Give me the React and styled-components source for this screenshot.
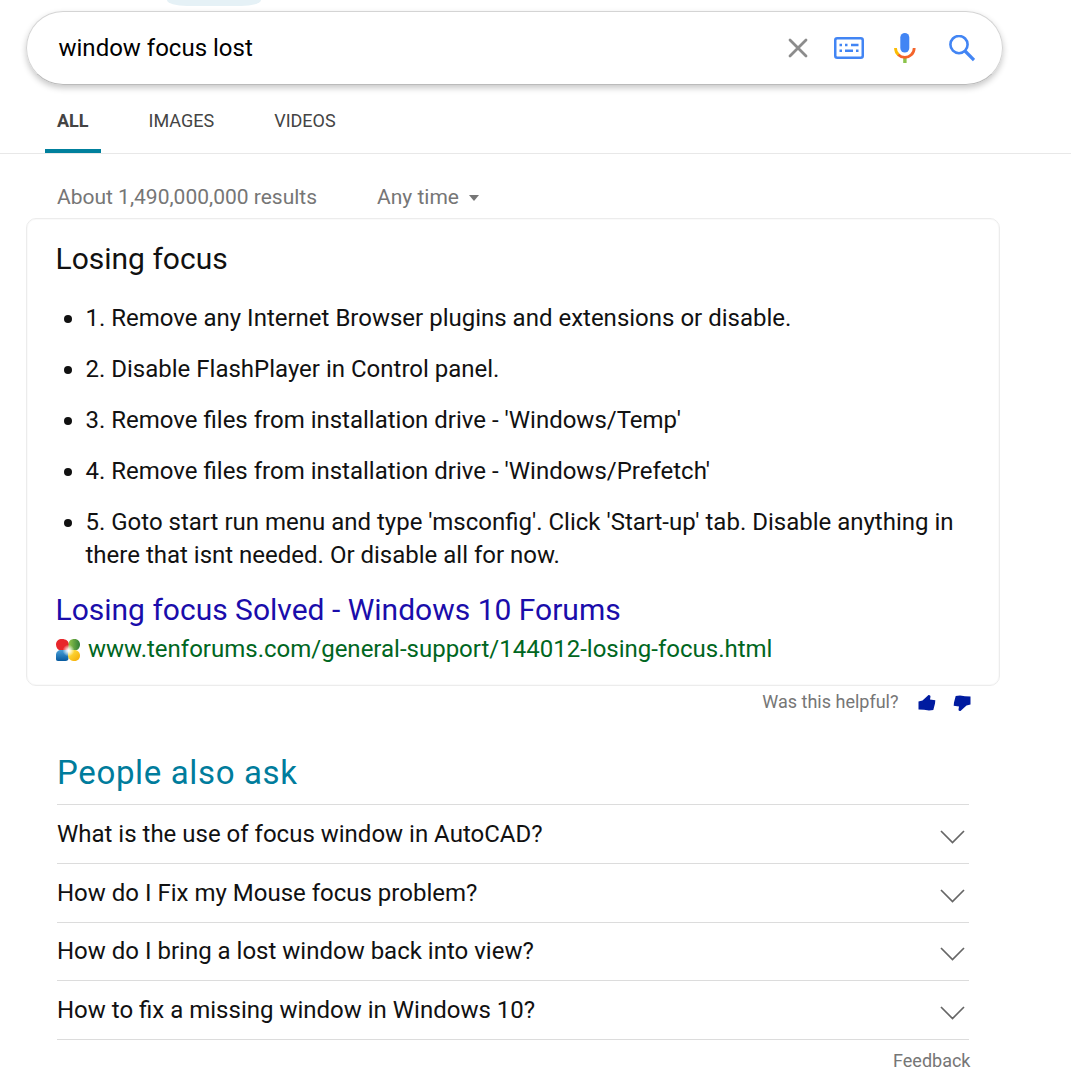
import React from 'react';
import styled, { createGlobalStyle } from 'styled-components';

const Global = createGlobalStyle`
  * { box-sizing: border-box; }
  body { margin: 0; background: #fff; font-family: Roboto, Arial, sans-serif; color: #111; overflow: hidden; }
  h1, h2, p, ul { margin: 0; padding: 0; font-weight: 400; }
  svg { display: block; flex: none; }
`;

const Page = styled.div`
  width: 1071px;
  height: 1086px;
  overflow: hidden;
`;
const TopPill = styled.div`
  width: 94px;
  height: 6px;
  margin-left: 167px;
  background: #e5f1f6;
  border-radius: 0 0 20px 20px / 0 0 6px 6px;
`;
const SearchBox = styled.div`
  display: flex;
  align-items: center;
  width: 977px;
  height: 74px;
  margin: 5px 0 0 26px;
  padding: 0 28px 0 31.5px;
  border: 1px solid #d4d4d4;
  border-bottom-color: #bbb;
  border-radius: 37px;
  box-shadow: 0 3px 6px rgba(0, 0, 0, 0.22);
`;
const Query = styled.span`
  flex: 1;
  font-size: 24px;
  line-height: 32px;
  color: #000;
`;
const SearchIcons = styled.div`
  display: grid;
  grid-template-columns: 46px 60px 54.5px 25.5px;
  align-items: center;
`;
const Tabs = styled.nav`
  display: flex;
  height: 69px;
  padding-left: 45px;
  border-bottom: 1px solid #e8e8e8;
`;
const Tab = styled.a`
  height: 68px;
  padding: 25px 12px 0;
  margin-right: 36px;
  font-size: 18px;
  line-height: 22px;
  color: #444;
  font-weight: ${(p) => (p.$active ? 700 : 400)};
  border-bottom: 4px solid ${(p) => (p.$active ? '#00809d' : 'transparent')};
`;
const Filters = styled.div`
  display: flex;
  align-items: flex-start;
  height: 64px;
  padding: 30px 0 0 57px;
  font-size: 21px;
  line-height: 26px;
  color: #767676;
`;
const Count = styled.span`
  width: 320px;
`;
const TimeFilter = styled.span`
  display: flex;
  align-items: center;
  gap: 10px;
`;
const Caret = styled.i`
  border: 5.5px solid transparent;
  border-top: 6px solid #767676;
  border-bottom: 0;
  margin-top: 2px;
`;
const Card = styled.section`
  width: 974px;
  height: 468px;
  margin-left: 26px;
  padding: 20px 20px 0 28.5px;
  border: 1px solid #ececec;
  border-radius: 10px;
  box-shadow: inset 0 0 0 1px #fafafa;
`;
const CardTitle = styled.h2`
  font-size: 30px;
  line-height: 40px;
`;
const Steps = styled.ul`
  display: flex;
  flex-direction: column;
  gap: 18px;
  padding: 23px 0 0 6px;
  list-style: none;
`;
const Step = styled.li`
  display: flex;
  font-size: 24px;
  line-height: 33px;
  white-space: pre-line;
  &::before {
    content: '';
    flex: none;
    width: 8px;
    height: 8px;
    margin: 13px 14px 0 2px;
    border-radius: 50%;
    background: #111;
  }
`;
const ResultLink = styled.a`
  display: block;
  margin-top: 18px;
  font-size: 30px;
  line-height: 40px;
  color: #1a0dab;
`;
const Source = styled.div`
  display: flex;
  align-items: center;
  gap: 8.5px;
  height: 34px;
  margin-top: 2px;
  font-size: 24px;
  line-height: 34px;
  color: #006621;
  svg { margin-top: 2px; }
`;
const Helpful = styled.div`
  display: flex;
  align-items: center;
  justify-content: flex-end;
  width: 970.5px;
  height: 31px;
  font-size: 18px;
  color: #767676;
`;
const Thumbs = styled.span`
  display: flex;
  gap: 17px;
  margin: 2px 0 0 19px;
`;
const Ask = styled.section`
  width: 912px;
  margin-left: 57px;
`;
const AskTitle = styled.h2`
  height: 87px;
  padding-top: 34px;
  font-size: 33px;
  line-height: 44px;
  color: #007c9c;
  letter-spacing: 0.65px;
`;
const Questions = styled.div`
  border-bottom: 1px solid #dcdcdc;
`;
const Question = styled.div`
  display: flex;
  justify-content: space-between;
  align-items: flex-start;
  height: ${(p) => (p.$compact ? 58 : 59)}px;
  padding: ${(p) => (p.$compact ? 12 : 13)}px 4px 0 0;
  border-top: 1px solid #dcdcdc;
  font-size: 24px;
  line-height: 32px;
  svg { margin-top: 12px; }
`;
const Feedback = styled.div`
  margin-right: -1.5px;
  padding-top: 10px;
  text-align: right;
  font-size: 18px;
  line-height: 22px;
  color: #767676;
`;

const CloseIcon = () => (
  <svg width="20" height="20" viewBox="0 0 20 20">
    <path d="M2 2l16 16M18 2L2 18" stroke="#8c8c8c" strokeWidth="2.8" strokeLinecap="round" />
  </svg>
);
const KeyboardIcon = () => (
  <svg width="30" height="22" viewBox="0 0 30 22" fill="none" stroke="#4285f4">
    <rect x="1.25" y="1.25" width="27.5" height="19.5" rx="2" strokeWidth="2.5" />
    <path d="M5.500 8H8M11 8h2.500M17 8h7.500M5.500 13.700H8M11 13.700h8M22 13.700h2.500" strokeWidth="2.5" />
  </svg>
);
const MicIcon = () => (
  <svg width="22" height="30" viewBox="0 0 22 30" fill="none">
    <rect x="6.3" y="0" width="9" height="19.5" rx="4.5" fill="#4285f4" />
    <path d="M9.200 24h3.400v6H9.200z" fill="#8bc34a" />
    <path d="M1.500 15c0 3 1.200 5.500 3.300 7.200" stroke="#fbbc05" strokeWidth="2.8" />
    <path d="M4.300 21.700c3.700 3.600 9.500 3.500 13 .1 1.900-1.800 2.900-4.100 2.900-6.800" stroke="#f4642a" strokeWidth="2.8" />
  </svg>
);
const SearchGlyph = () => (
  <svg width="26" height="27" viewBox="0 0 26 27" fill="none" stroke="#4285f4">
    <circle cx="10" cy="9.6" r="8.6" strokeWidth="2.6" />
    <path d="M16 16L25 25" strokeWidth="3.2" />
  </svg>
);
const ForumLogo = () => (
  <svg width="24" height="22" viewBox="0 0 24 22">
    <defs>
      <radialGradient id="glow"><stop offset="0" stopColor="#fff" /><stop offset=".25" stopColor="#fff" stopOpacity=".85" /><stop offset="1" stopColor="#fff" stopOpacity="0" /></radialGradient>
      <linearGradient id="blue" x2="0" y2="1"><stop stopColor="#4aa0d8" /><stop offset="1" stopColor="#075a9f" /></linearGradient>
      <linearGradient id="green" x2="1" y2="0"><stop stopColor="#94c64b" /><stop offset="1" stopColor="#2e7d37" /></linearGradient>
      <linearGradient id="yellow" x2="1" y2="1"><stop stopColor="#ffe94d" /><stop offset="1" stopColor="#f5a800" /></linearGradient>
    </defs>
    <path d="M6 0c4 0 6.800 2 7 6l-.5 6H5C2 11 0 9 0 5.500S2.500 0 6 0z" fill="#e8272b" />
    <path d="M18.500 0C22 0 24 2.500 24 5.500S22 11.500 18.500 11.500H12.500V6c0-4 2-6 6-6z" fill="url(#green)" />
    <path d="M5.500 11H12.500v8c0 2-1 3-3 3H2c-1.500 0-2-1-2-2v-4c0-3 2-5 5.500-5z" fill="url(#blue)" />
    <path d="M12 11h6c4 0 6 2.500 6 5.500S22 22 18.500 22 12 20 12 16z" fill="url(#yellow)" />
    <circle cx="12.500" cy="11.500" r="6" fill="url(#glow)" />
  </svg>
);
const Thumb = ({ down }) => (
  <svg width="18" height="18" viewBox="0 0 18 18" fill="#001ba0">
    <path
      transform={down ? 'rotate(180 9 9)' : undefined}
      d="M.5 7.500L4.500 6.500 10.500 1Q12.600.8 12.500 2.500L12 5.500 17.300 6.300 17 9.500 15.300 16 11 16.500 6 15.800.5 15.500z"
    />
  </svg>
);
const Chevron = () => (
  <svg width="25" height="14" viewBox="0 0 25 14" fill="none">
    <path d="M1 1l11.500 11.500L24 1" stroke="#666" strokeWidth="1.700" />
  </svg>
);

const steps = [
  '1. Remove any Internet Browser plugins and extensions or disable.',
  '2. Disable FlashPlayer in Control panel.',
  "3. Remove files from installation drive - 'Windows/Temp'",
  "4. Remove files from installation drive - 'Windows/Prefetch'",
  "5. Goto start run menu and type 'msconfig'. Click 'Start-up' tab. Disable anything in\nthere that isnt needed. Or disable all for now.",
];
const questions = [
  { text: 'What is the use of focus window in AutoCAD?' },
  { text: 'How do I Fix my Mouse focus problem?' },
  { text: 'How do I bring a lost window back into view?', compact: true },
  { text: 'How to fix a missing window in Windows 10?' },
];

export default function App() {
  return (
    <Page>
      <Global />
      <TopPill />
      <SearchBox>
        <Query>window focus lost</Query>
        <SearchIcons>
          <CloseIcon />
          <KeyboardIcon />
          <MicIcon />
          <SearchGlyph />
        </SearchIcons>
      </SearchBox>
      <Tabs>
        <Tab $active>ALL</Tab>
        <Tab>IMAGES</Tab>
        <Tab>VIDEOS</Tab>
      </Tabs>
      <Filters>
        <Count>About 1,490,000,000 results</Count>
        <TimeFilter>Any time<Caret /></TimeFilter>
      </Filters>
      <Card>
        <CardTitle>Losing focus</CardTitle>
        <Steps>
          {steps.map((s) => <Step key={s}>{s}</Step>)}
        </Steps>
        <ResultLink>Losing focus Solved - Windows 10 Forums</ResultLink>
        <Source><ForumLogo />www.tenforums.com/general-support/144012-losing-focus.html</Source>
      </Card>
      <Helpful>
        Was this helpful?
        <Thumbs><Thumb /><Thumb down /></Thumbs>
      </Helpful>
      <Ask>
        <AskTitle>People also ask</AskTitle>
        <Questions>
          {questions.map((q) => (
            <Question key={q.text} $compact={q.compact}>{q.text}<Chevron /></Question>
          ))}
        </Questions>
        <Feedback>Feedback</Feedback>
      </Ask>
    </Page>
  );
}
